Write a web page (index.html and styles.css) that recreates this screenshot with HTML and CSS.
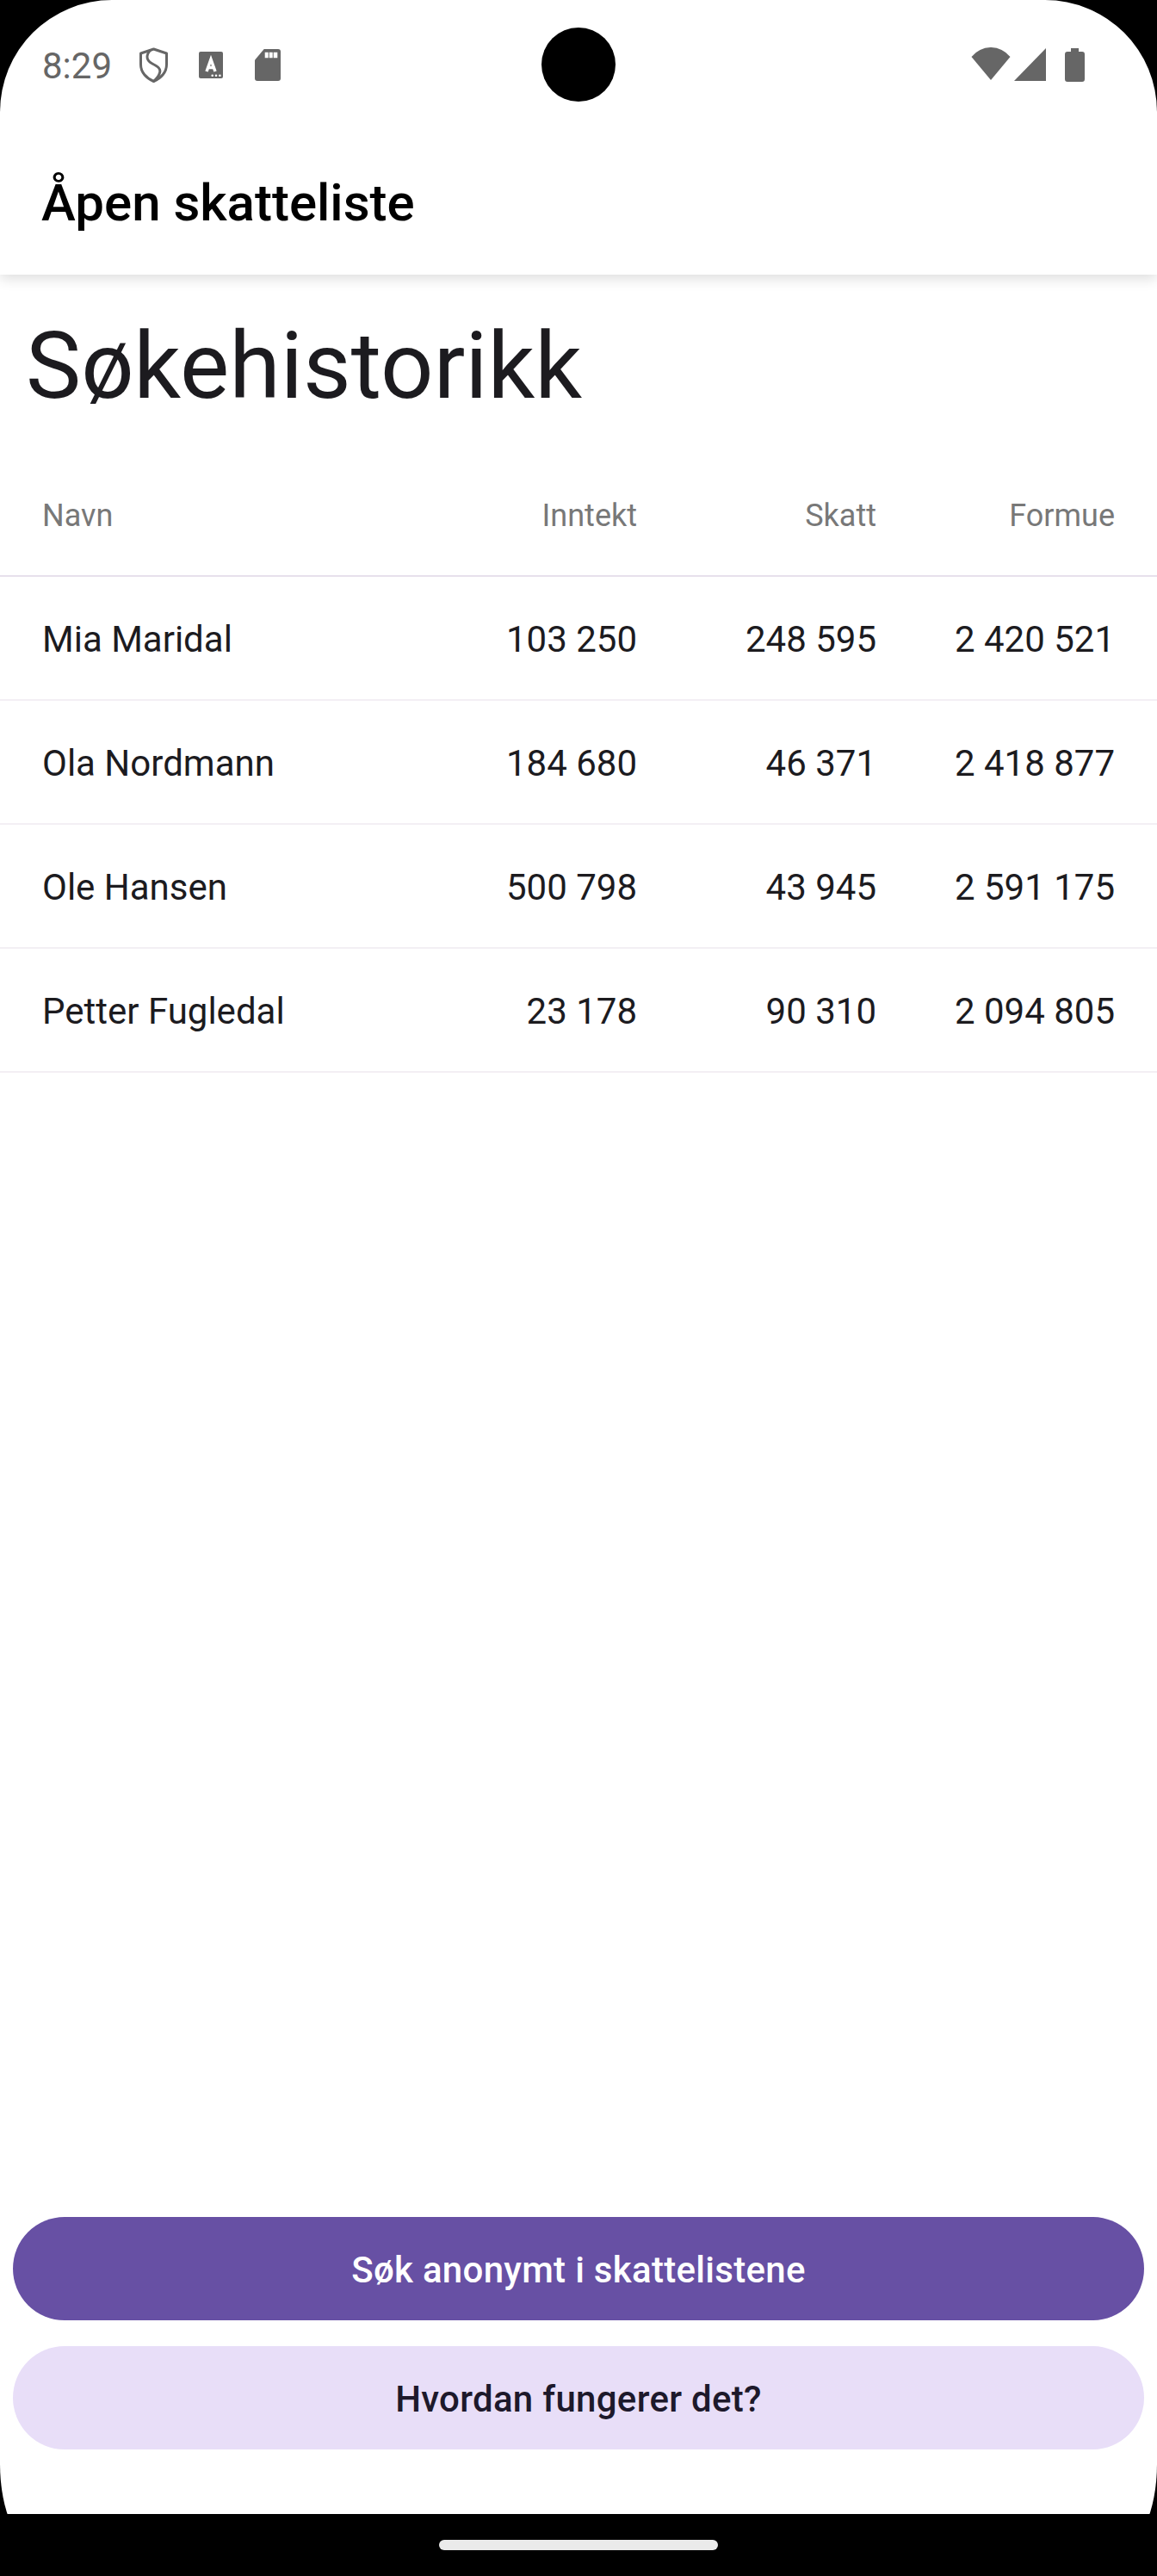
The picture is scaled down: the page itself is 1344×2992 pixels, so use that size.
FILE: index.html
```html
<!DOCTYPE html>
<html lang="no">
<head>
  <meta charset="UTF-8">
  <meta name="viewport" content="width=device-width, initial-scale=1.0">
  <title>Åpen skatteliste</title>
  <link rel="stylesheet" href="styles.css">
</head>
<body>
  <div class="screen">
    <div class="topbar">
      <div class="statusbar">
        <div class="status-left">
          <span class="time">8:29</span>
          <svg class="ic-shield" viewBox="0 0 33 41"><path d="M16.500 2 31.500 7V20C31.500 29 25 36 16.500 39.500 8 36 1.500 29 1.500 20V7Z" fill="none" stroke="#666" stroke-width="3" stroke-linejoin="round"/><path d="M13 3C6 10 9 16 15 19 21 22 26 25 23 31 22 34 19 37 17 39" fill="none" stroke="#666" stroke-width="3"/></svg>
          <svg class="ic-a" viewBox="0 0 28 31"><rect width="28" height="31" rx="2" fill="#666"/><path d="M9 23 14 9l5 14M11 18.500h6" fill="none" stroke="#fff" stroke-width="3.500"/><circle cx="15.700" cy="27.700" r="1.300" fill="#fff"/><circle cx="20" cy="27.700" r="1.300" fill="#fff"/><circle cx="24.400" cy="27.700" r="1.300" fill="#fff"/></svg>
          <svg class="ic-sd" viewBox="0 0 30 37"><path d="M10.700 0H27a3 3 0 0 1 3 3V34a3 3 0 0 1-3 3H3a3 3 0 0 1-3-3V12.700Z" fill="#666"/><path d="M11.700 3.700h4v6.600h-4ZM16.700 3.700h4v6.600h-4ZM21.700 3.700h4.600v6.600h-4.600Z" fill="#fff"/></svg>
        </div>
        <div class="camera"></div>
        <div class="status-right">
          <svg class="ic-wifi" viewBox="0 0 46 38"><path d="M23 38 .5 11A28.500 28.500 0 0 1 45.500 11Z" fill="#666"/></svg>
          <svg class="ic-signal" viewBox="0 0 37 38"><path d="M37 0V38H0Z" fill="#666"/></svg>
          <svg class="ic-battery" viewBox="0 0 23 39"><path d="M7 0H16V4H20a3 3 0 0 1 3 3V36a3 3 0 0 1-3 3H3a3 3 0 0 1-3-3V7a3 3 0 0 1 3-3H7Z" fill="#666"/></svg>
        </div>
      </div>
      <header class="appbar">Åpen skatteliste</header>
    </div>

    <main class="content">
      <h1>Søkehistorikk</h1>
      <div class="row head">
        <span>Navn</span><span>Inntekt</span><span>Skatt</span><span>Formue</span>
      </div>
      <div class="row">
        <span>Mia Maridal</span><span>103 250</span><span>248 595</span><span>2 420 521</span>
      </div>
      <div class="row">
        <span>Ola Nordmann</span><span>184 680</span><span>46 371</span><span>2 418 877</span>
      </div>
      <div class="row">
        <span>Ole Hansen</span><span>500 798</span><span>43 945</span><span>2 591 175</span>
      </div>
      <div class="row">
        <span>Petter Fugledal</span><span>23 178</span><span>90 310</span><span>2 094 805</span>
      </div>
    </main>

    <div class="actions">
      <button class="btn primary" type="button">Søk anonymt i skattelistene</button>
      <button class="btn secondary" type="button">Hvordan fungerer det?</button>
    </div>
  </div>
  <div class="navbar"><div class="home"></div></div>
</body>
</html>
```

FILE: styles.css
```css
* {
  box-sizing: border-box;
}
html, body {
  margin: 0;
  padding: 0;
  background: #000;
}
body {
  width: 1344px;
  height: 2992px;
  overflow: hidden;
  font-family: Roboto, "Liberation Sans", sans-serif;
  display: flex;
  flex-direction: column;
}
.screen {
  flex: 1;
  display: flex;
  flex-direction: column;
  background: #fff;
  border-radius: 130px 130px 46px 46px / 130px 130px 100px 100px;
  overflow: hidden;
}
.topbar {
  flex: none;
  position: relative;
  box-shadow: 0 5px 14px rgba(0, 0, 0, 0.13);
}
.statusbar {
  height: 149px;
  padding: 0 84px 0 49px;
  display: flex;
  align-items: flex-start;
  justify-content: space-between;
}
.status-left, .status-right {
  display: flex;
  align-items: flex-start;
}
.time {
  font-size: 42px;
  line-height: 49px;
  margin-top: 52px;
  color: #666;
  width: 113px;
}
.camera {
  position: absolute;
  left: 629px;
  top: 32px;
  width: 86px;
  height: 86px;
  border-radius: 50%;
  background: #000;
}
.status-left svg, .status-right svg {
  display: block;
}
.ic-shield { width: 33px; height: 41px; margin-top: 55px; }
.ic-a { width: 28px; height: 31px; margin: 60px 37px 0 36px; }
.ic-sd { width: 30px; height: 37px; margin-top: 57px; }
.ic-wifi { width: 46px; height: 38px; margin-top: 55px; }
.ic-signal { width: 37px; height: 38px; margin: 56px 22px 0 4px; }
.ic-battery { width: 23px; height: 39px; margin-top: 56px; }
.appbar {
  height: 170px;
  padding: 2px 48px 0;
  display: flex;
  align-items: center;
  font-size: 60px;
  font-weight: 500;
  color: #000;
}
.content {
  flex: 1;
}
h1 {
  margin: 0;
  padding-top: 43px;
  padding-left: 30px;
  height: 204px;
  font-size: 108px;
  line-height: 127px;
  font-weight: 400;
  color: #1c1b1f;
}
.row {
  display: grid;
  grid-template-columns: 1fr 278px 278px 277px;
  align-items: center;
  height: 144px;
  padding: 3px 49px 0;
  font-size: 42px;
  color: #1c1b1f;
  border-bottom: 2px solid #f3eff4;
}
.row span:not(:first-child) {
  text-align: right;
}
.head {
  height: 147px;
  padding-top: 6px;
  font-size: 36px;
  color: #787878;
  border-bottom: 2px solid #e7e0ec;
}
.actions {
  flex: none;
  display: flex;
  flex-direction: column;
  gap: 30px;
  padding: 0 15px 117px;
}
.btn {
  height: 120px;
  border: none;
  border-radius: 60px;
  padding: 3px 0 0;
  font-family: inherit;
  font-size: 42px;
  font-weight: 500;
  letter-spacing: 0.3px;
}
.primary {
  background: #6750a4;
  color: #fff;
}
.secondary {
  background: #e8def8;
  color: #1d192b;
}
.navbar {
  height: 72px;
  margin-top: -42px;
  flex: none;
  position: relative;
  background: #000;
  padding-top: 30px;
}
.home {
  width: 324px;
  height: 12px;
  margin: 0 auto;
  background: #eaeaea;
  border-radius: 6px;
}
```
